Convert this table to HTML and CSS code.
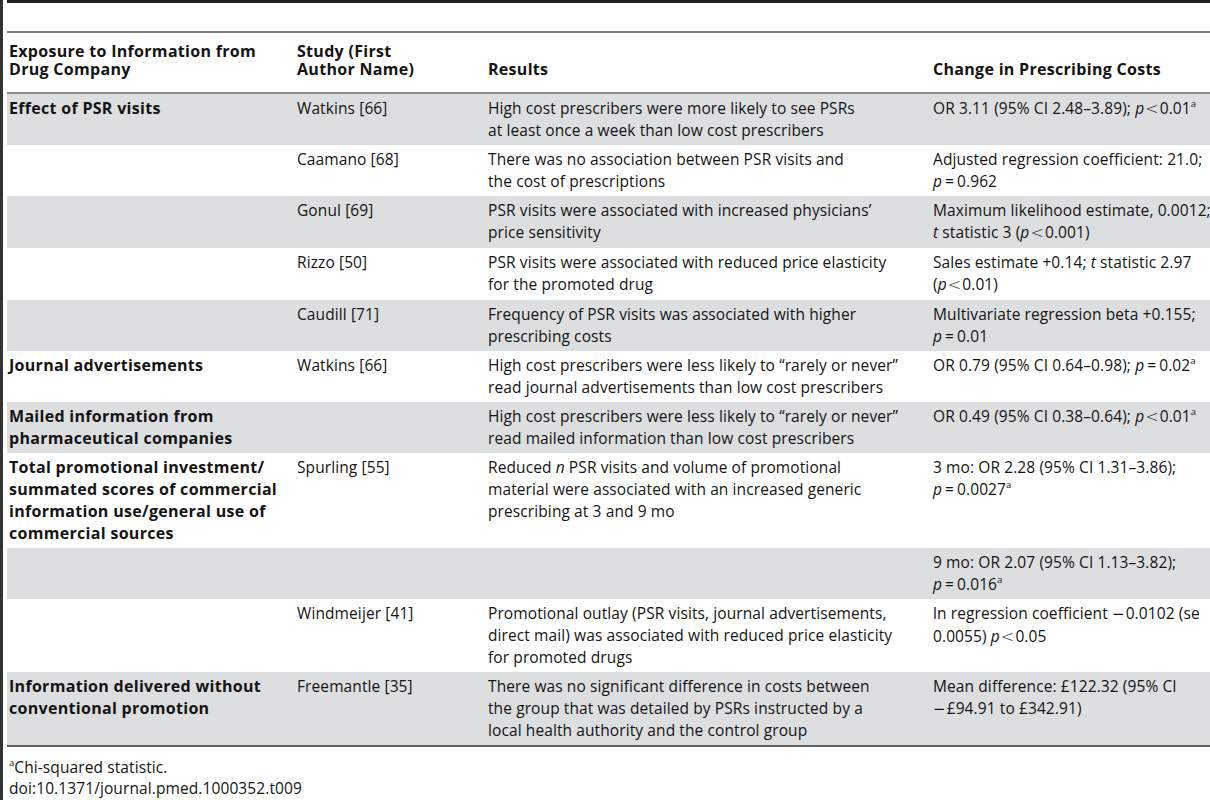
FILE: index.html
```html
<!DOCTYPE html>
<html>
<head>
<meta charset="utf-8">
<link rel="stylesheet" href="styles.css">
</head>
<body>
<div class="page">
  <div class="content">
    <div class="topbar"></div>
    <div class="gap"></div>
    <table class="tbl">
      <colgroup>
        <col class="c1"><col class="c2"><col class="c3"><col class="c4">
      </colgroup>
      <thead>
        <tr>
          <th>Exposure to Information from<br>Drug Company</th>
          <th>Study (First<br>Author Name)</th>
          <th>Results</th>
          <th>Change in Prescribing Costs</th>
        </tr>
      </thead>
      <tbody>
        <tr class="g">
          <td class="b">Effect of PSR visits</td>
          <td>Watkins [66]</td>
          <td>High cost prescribers were more likely to see PSRs<br>at least once a week than low cost prescribers</td>
          <td>OR 3.11 (95% CI 2.48–3.89); <i>p</i><span class="lt">&lt;</span>0.01<sup>a</sup></td>
        </tr>
        <tr>
          <td></td>
          <td>Caamano [68]</td>
          <td>There was no association between PSR visits and<br>the cost of prescriptions</td>
          <td>Adjusted regression coefficient: 21.0;<br><i>p</i><span class="eq">=</span>0.962</td>
        </tr>
        <tr class="g">
          <td></td>
          <td>Gonul [69]</td>
          <td>PSR visits were associated with increased physicians’<br>price sensitivity</td>
          <td>Maximum likelihood estimate, 0.0012;<br><i>t</i> statistic 3 (<i>p</i><span class="lt">&lt;</span>0.001)</td>
        </tr>
        <tr>
          <td></td>
          <td>Rizzo [50]</td>
          <td>PSR visits were associated with reduced price elasticity<br>for the promoted drug</td>
          <td>Sales estimate +0.14; <i>t</i> statistic 2.97<br>(<i>p</i><span class="lt">&lt;</span>0.01)</td>
        </tr>
        <tr class="g">
          <td></td>
          <td>Caudill [71]</td>
          <td>Frequency of PSR visits was associated with higher<br>prescribing costs</td>
          <td>Multivariate regression beta +0.155;<br><i>p</i><span class="eq">=</span>0.01</td>
        </tr>
        <tr>
          <td class="b">Journal advertisements</td>
          <td>Watkins [66]</td>
          <td>High cost prescribers were less likely to “rarely or never”<br>read journal advertisements than low cost prescribers</td>
          <td>OR 0.79 (95% CI 0.64–0.98); <i>p</i><span class="eq">=</span>0.02<sup>a</sup></td>
        </tr>
        <tr class="g">
          <td class="b">Mailed information from<br>pharmaceutical companies</td>
          <td></td>
          <td>High cost prescribers were less likely to “rarely or never”<br>read mailed information than low cost prescribers</td>
          <td>OR 0.49 (95% CI 0.38–0.64); <i>p</i><span class="lt">&lt;</span>0.01<sup>a</sup></td>
        </tr>
        <tr>
          <td class="b">Total promotional investment/<br>summated scores of commercial<br>information use/general use of<br>commercial sources</td>
          <td>Spurling [55]</td>
          <td>Reduced <i>n</i> PSR visits and volume of promotional<br>material were associated with an increased generic<br>prescribing at 3 and 9 mo</td>
          <td>3 mo: OR 2.28 (95% CI 1.31–3.86);<br><i>p</i><span class="eq">=</span>0.0027<sup>a</sup></td>
        </tr>
        <tr class="g">
          <td></td>
          <td></td>
          <td></td>
          <td>9 mo: OR 2.07 (95% CI 1.13–3.82);<br><i>p</i><span class="eq">=</span>0.016<sup>a</sup></td>
        </tr>
        <tr>
          <td></td>
          <td>Windmeijer [41]</td>
          <td>Promotional outlay (PSR visits, journal advertisements,<br>direct mail) was associated with reduced price elasticity<br>for promoted drugs</td>
          <td>ln regression coefficient <span class="mn">−</span>0.0102 (se<br>0.0055) <i>p</i><span class="lt">&lt;</span>0.05</td>
        </tr>
        <tr class="g">
          <td class="b">Information delivered without<br>conventional promotion</td>
          <td>Freemantle [35]</td>
          <td>There was no significant difference in costs between<br>the group that was detailed by PSRs instructed by a<br>local health authority and the control group</td>
          <td>Mean difference: £122.32 (95% CI<br><span class="mn">−</span>£94.91 to £342.91)</td>
        </tr>
      </tbody>
    </table>
    <div class="notes">
      <p><sup>a</sup>Chi-squared statistic.</p>
      <p>doi:10.1371/journal.pmed.1000352.t009</p>
    </div>
  </div>
</div>
</body>
</html>
```

FILE: styles.css
```css
html, body {
  margin: 0;
  padding: 0;
  background: #ffffff;
}

body {
  font-family: "Open Sans", "Liberation Sans", sans-serif;
  font-size: 15.5px;
  letter-spacing: 0.1px;
  color: #141414;
}

.page {
  width: 1210px;
  height: 800px;
  border-left: 3px solid #333333;
  box-sizing: border-box;
  overflow: hidden;
}

.content {
  margin-left: 4px;
}

.topbar {
  height: 3px;
  background: #222222;
}

.gap {
  height: 28px;
}

.tbl {
  width: 1203px;
  border-collapse: collapse;
  table-layout: fixed;
  border-top: 2px solid #7a7a7a;
  border-bottom: 2px solid #5e5e5e;
}

.c1 { width: 288px; }
.c2 { width: 191px; }
.c3 { width: 445px; }
.c4 { width: 279px; }

.tbl th,
.tbl td {
  white-space: nowrap;
  text-align: left;
  padding-left: 2px;
  padding-right: 0;
}

.tbl th {
  vertical-align: bottom;
  font-size: 16px;
  font-weight: 700;
  letter-spacing: 0.3px;
  line-height: 18px;
  padding-top: 9px;
  padding-bottom: 14px;
  border-bottom: 2px solid #8a8a8a;
}

.tbl td {
  vertical-align: top;
  line-height: 22px;
  padding-top: 3px;
  padding-bottom: 4px;
}

.tbl tr.g td {
  background: #dddee0;
}

.tbl td.b {
  font-size: 16px;
  font-weight: 700;
  letter-spacing: 0.3px;
}

.lt {
  font-family: "DejaVu Sans", sans-serif;
  font-size: 16px;
  font-weight: 300;
  margin: 0 1px;
}

.eq {
  margin: 0 3px;
}

.mn {
  font-family: "DejaVu Sans", sans-serif;
  font-size: 15px;
  margin-right: 1px;
}

sup {
  font-size: 9.5px;
  line-height: 0;
  vertical-align: 7px;
  letter-spacing: 0;
}

.notes {
  padding: 10px 0 0 2px;
}

.notes p {
  margin: 0;
  line-height: 21px;
}
```
